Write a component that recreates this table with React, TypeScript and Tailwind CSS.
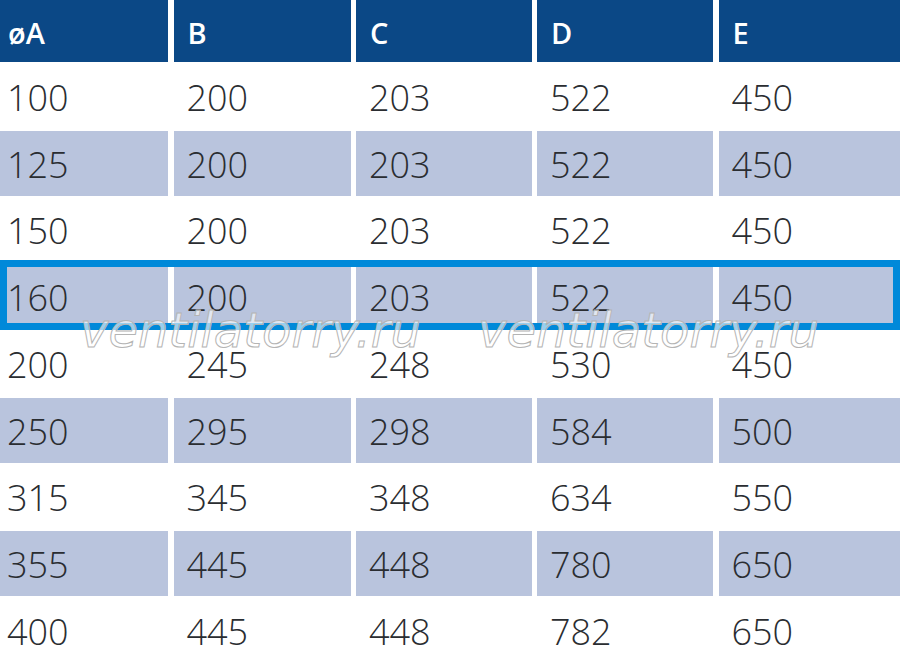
const headers = ['øA', 'B', 'C', 'D', 'E'];

const rows = [
  ['100', '200', '203', '522', '450'],
  ['125', '200', '203', '522', '450'],
  ['150', '200', '203', '522', '450'],
  ['160', '200', '203', '522', '450'],
  ['200', '245', '248', '530', '450'],
  ['250', '295', '298', '584', '500'],
  ['315', '345', '348', '634', '550'],
  ['355', '445', '448', '780', '650'],
  ['400', '445', '448', '782', '650'],
];

const gridCols = 'grid grid-cols-[168px_177px_175.5px_176px_1fr] gap-x-[5.5px]';

export default function App() {
  return (
    <div className="relative w-[900px] h-[660px] overflow-hidden bg-white font-['Open_Sans','Liberation_Sans',sans-serif]">
      <div className="flex flex-col gap-y-[1.75px]">
        <div className={`${gridCols} h-[62px]`}>
          {headers.map((h, i) => (
            <div
              key={h}
              className={`flex items-center bg-[#0b4886] text-white text-[29px] font-semibold leading-none pt-[3px] ${i === 0 ? 'pl-[8px]' : 'pl-[14px]'}`}
            >
              {h}
            </div>
          ))}
        </div>
        {rows.map((row, r) => (
          <div key={r} className={`${gridCols} h-[65px]`}>
            {row.map((v, c) => (
              <div
                key={c}
                className={`flex items-center text-[36px] font-light leading-none text-[#2a2d31] pt-[3px] ${r % 2 === 1 ? 'bg-[#b9c4dd]' : 'bg-white'} ${c === 0 ? 'pl-[7px]' : 'pl-[13px]'}`}
              >
                {v}
              </div>
            ))}
          </div>
        ))}
      </div>

      {/* highlighted row */}
      <div className="absolute left-0 top-[260px] w-[900px] h-[70px] border-[7px] border-[#0089d9]" />

      {/* watermark */}
      <span className="absolute left-[80px] top-[306px] text-[48px] leading-none italic font-['DejaVu_Sans',sans-serif] text-white/60 [-webkit-text-stroke:1px_#b4b4b4] select-none">
        ventilatorry.ru
      </span>
      <span className="absolute left-[478px] top-[306px] text-[48px] leading-none italic font-['DejaVu_Sans',sans-serif] text-white/60 [-webkit-text-stroke:1px_#b4b4b4] select-none">
        ventilatorry.ru
      </span>
    </div>
  );
}
